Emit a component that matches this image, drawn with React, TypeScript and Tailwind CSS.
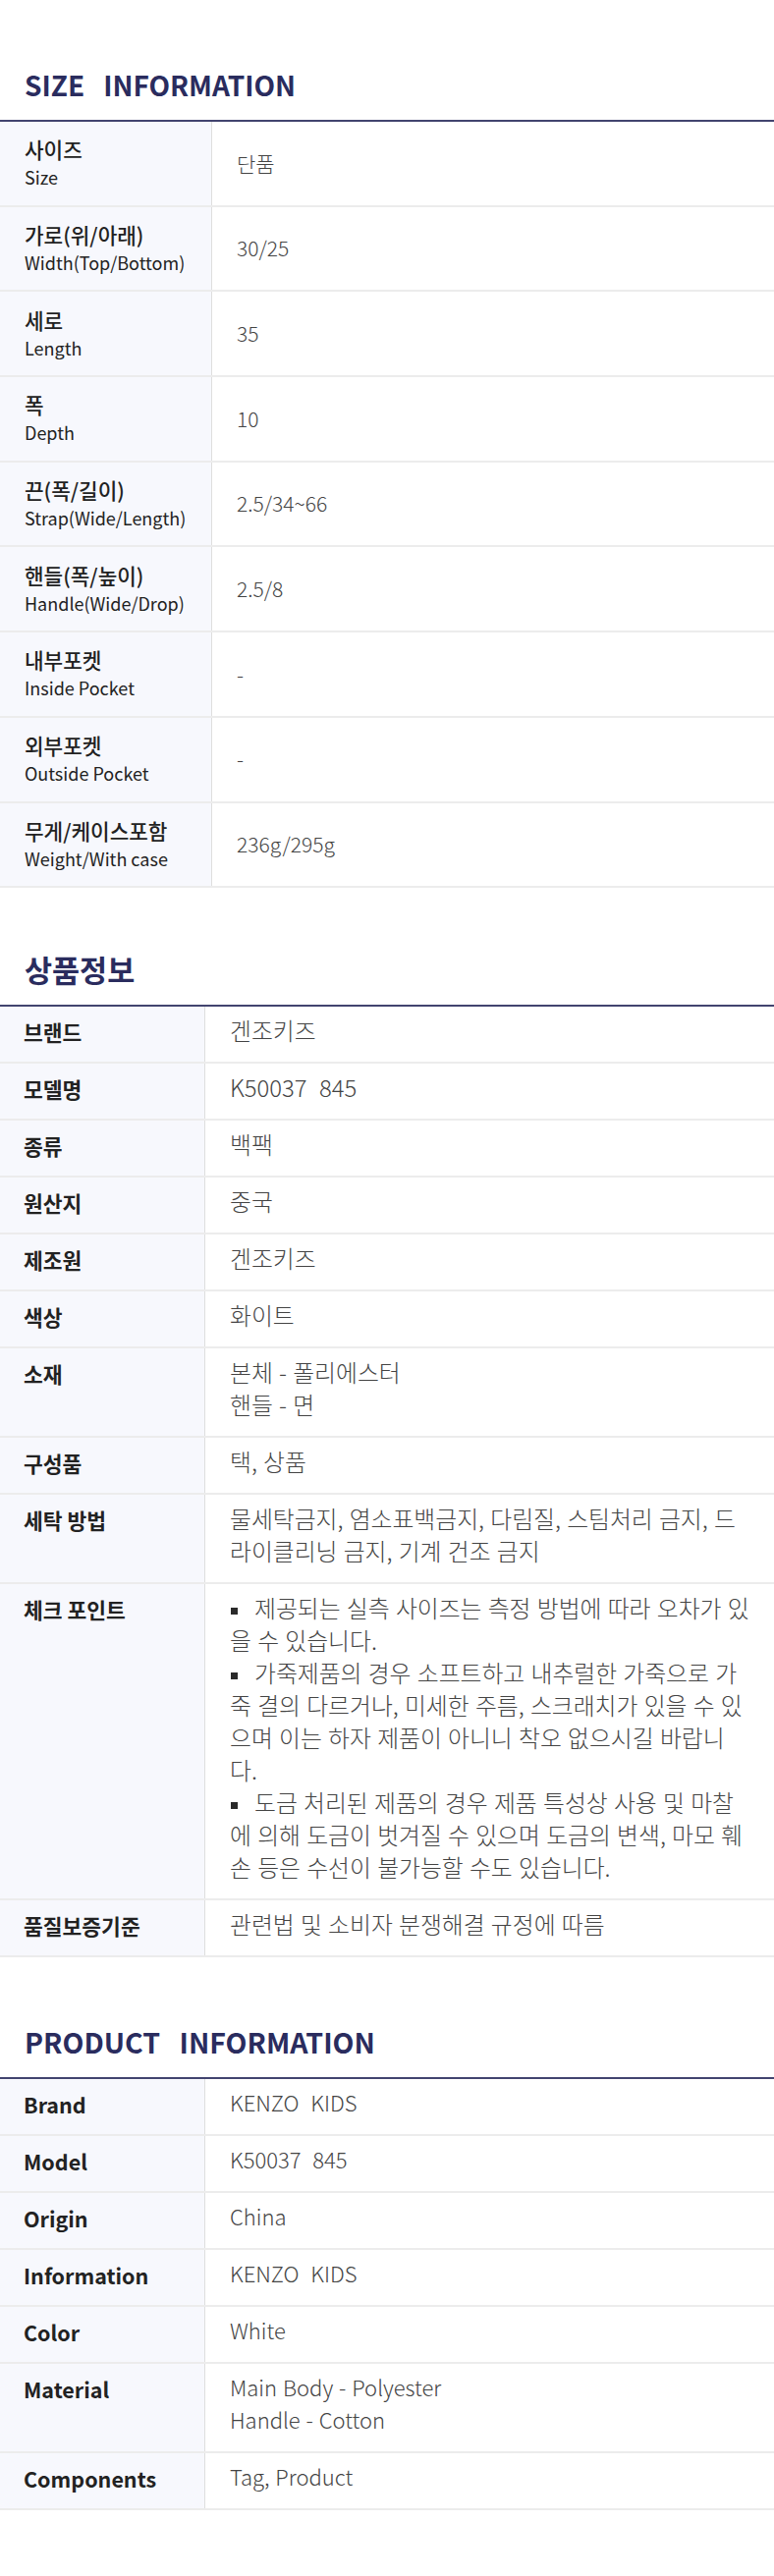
import type { ReactNode } from 'react'

const sizeRows = [
  { ko: '사이즈', en: 'Size', value: '단품' },
  { ko: '가로(위/아래)', en: 'Width(Top/Bottom)', value: '30/25' },
  { ko: '세로', en: 'Length', value: '35' },
  { ko: '폭', en: 'Depth', value: '10' },
  { ko: '끈(폭/길이)', en: 'Strap(Wide/Length)', value: '2.5/34~66' },
  { ko: '핸들(폭/높이)', en: 'Handle(Wide/Drop)', value: '2.5/8' },
  { ko: '내부포켓', en: 'Inside Pocket', value: '-' },
  { ko: '외부포켓', en: 'Outside Pocket', value: '-' },
  { ko: '무게/케이스포함', en: 'Weight/With case', value: '236g/295g' },
]

const Bullet = () => (
  <span className="inline-block w-[7px] h-[7px] bg-[#2a2a2a] align-[3px] ml-[1px] mr-[17px]" />
)

// lines broken where the original detail page breaks them
const Lines = ({ lines }: { lines: ReactNode[] }) => (
  <>
    {lines.map((line, i) => (
      <div key={i} className="whitespace-nowrap">
        {line}
      </div>
    ))}
  </>
)

type Row = { label: string; value: ReactNode }

const infoRows: Row[] = [
  { label: '브랜드', value: '겐조키즈' },
  { label: '모델명', value: 'K50037\u00a0 845' },
  { label: '종류', value: '백팩' },
  { label: '원산지', value: '중국' },
  { label: '제조원', value: '겐조키즈' },
  { label: '색상', value: '화이트' },
  { label: '소재', value: <Lines lines={['본체 - 폴리에스터', '핸들 - 면']} /> },
  { label: '구성품', value: '택, 상품' },
  {
    label: '세탁 방법',
    value: <Lines lines={['물세탁금지, 염소표백금지, 다림질, 스팀처리 금지, 드', '라이클리닝 금지, 기계 건조 금지']} />,
  },
  {
    label: '체크 포인트',
    value: (
      <Lines
        lines={[
          <>
            <Bullet />
            제공되는 실측 사이즈는 측정 방법에 따라 오차가 있
          </>,
          '을 수 있습니다.',
          <>
            <Bullet />
            가죽제품의 경우 소프트하고 내추럴한 가죽으로 가
          </>,
          '죽 결의 다르거나, 미세한 주름, 스크래치가 있을 수 있',
          '으며 이는 하자 제품이 아니니 착오 없으시길 바랍니',
          '다.',
          <>
            <Bullet />
            도금 처리된 제품의 경우 제품 특성상 사용 및 마찰
          </>,
          '에 의해 도금이 벗겨질 수 있으며 도금의 변색, 마모 훼',
          '손 등은 수선이 불가능할 수도 있습니다.',
        ]}
      />
    ),
  },
  { label: '품질보증기준', value: '관련법 및 소비자 분쟁해결 규정에 따름' },
]

const productRows: Row[] = [
  { label: 'Brand', value: 'KENZO\u00a0 KIDS' },
  { label: 'Model', value: 'K50037\u00a0 845' },
  { label: 'Origin', value: 'China' },
  { label: 'Information', value: 'KENZO\u00a0 KIDS' },
  { label: 'Color', value: 'White' },
  { label: 'Material', value: <Lines lines={['Main Body - Polyester', 'Handle - Cotton']} /> },
  { label: 'Components', value: 'Tag, Product' },
]

function Heading({ children, size }: { children: ReactNode; size: string }) {
  return (
    <h2 className={`px-[25px] leading-[40px] font-bold text-[#2a2c5e] whitespace-pre mb-[16px] ${size}`}>
      {children}
    </h2>
  )
}

function InfoTable({ rows, valueSize }: { rows: Row[]; valueSize: string }) {
  return (
    <div className="border-t-2 border-[#42446f]">
      {rows.map((row) => (
        <div key={row.label} className="grid grid-cols-[209px_1fr] border-b-2 border-[#ececec]">
          <div className="bg-[#f7f8fd] border-r border-[#dedede] pl-[24px] pr-2 pt-[11px] pb-[12px] text-[21.5px] leading-[30px] font-bold text-[#222]">
            {row.label}
          </div>
          <div
            className={`pl-[25px] pr-[24px] pt-[7px] pb-[16px] leading-[33px] font-light text-[#444] [word-spacing:1px] ${valueSize}`}
          >
            {row.value}
          </div>
        </div>
      ))}
    </div>
  )
}

export default function App() {
  return (
    <div className="w-[788px] bg-white font-['Noto_Sans_CJK_KR',sans-serif] pb-[67px]">
      <section className="pt-[66px]">
        <Heading size="text-[28px]">{'SIZE   INFORMATION'}</Heading>
        <div className="border-t-2 border-[#42446f]">
          {sizeRows.map((row) => (
            <div key={row.en} className="grid grid-cols-[216px_1fr] border-b-2 border-[#ececec] min-h-[86.7px]">
              <div className="bg-[#f7f8fd] border-r border-[#dedede] pl-[25px] flex flex-col justify-center text-[#222]">
                <span className="text-[21.3px] leading-[29px] font-medium">{row.ko}</span>
                <span className="text-[18px] leading-[29px]">{row.en}</span>
              </div>
              <div className="pl-[25px] flex items-center text-[21px] font-light text-[#444]">{row.value}</div>
            </div>
          ))}
        </div>
      </section>

      <section className="mt-[63px]">
        <Heading size="text-[30.5px]">상품정보</Heading>
        <InfoTable rows={infoRows} valueSize="text-[23.8px]" />
      </section>

      <section className="mt-[66px]">
        <Heading size="text-[28.5px]">{'PRODUCT   INFORMATION'}</Heading>
        <InfoTable rows={productRows} valueSize="text-[22px]" />
      </section>
    </div>
  )
}
